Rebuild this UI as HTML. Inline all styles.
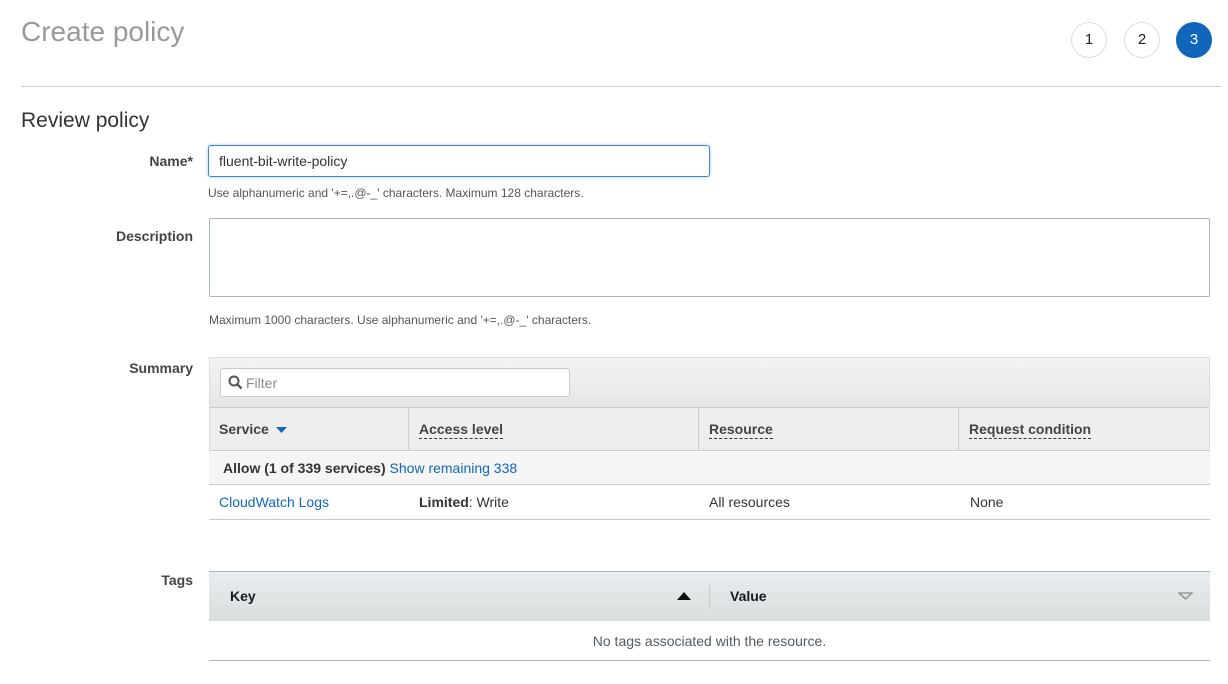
<!DOCTYPE html>
<html><head><style>
*{box-sizing:border-box;margin:0;padding:0}
body{width:1228px;height:684px;background:#fff;font-family:"Liberation Sans",Arial,sans-serif;color:#444;position:relative;overflow:hidden;font-size:14px}
.a{position:absolute}
.c{position:absolute;width:36px;height:36px;border-radius:50%;border:1px solid #ddd;text-align:center;line-height:34px;font-size:15px;color:#222;top:21px}
.lbl{position:absolute;font-weight:bold;color:#444;font-size:14px;right:1035px;text-align:right}
.hint{position:absolute;font-size:12px;color:#555}
.dash{border-bottom:1px dashed #333;padding-bottom:1px}
</style></head><body>
<div class="a" style="left:21px;top:16px;font-size:28px;color:#999">Create policy</div>
<div class="c" style="left:1071px;top:22px">1</div>
<div class="c" style="left:1124px;top:22px">2</div>
<div class="c" style="left:1176px;top:22px;background:#1166bb;border-color:#1166bb;color:#fff">3</div>
<div class="a" style="left:21px;top:86px;width:1200px;border-top:1px solid #ccc"></div>
<div class="a" style="left:21px;top:109px;font-size:21px;color:#333">Review policy</div>

<div class="lbl" style="top:153px">Name*</div>
<div class="a" style="left:208px;top:145px;width:502px;height:32px;border:1px solid #3b87d9;border-radius:3px;box-shadow:0 0 3px rgba(0,115,187,.4);padding:7px 10px;font-size:14px;color:#333">fluent-bit-write-policy</div>
<div class="hint" style="left:208px;top:186px">Use alphanumeric and '+=,.@-_' characters. Maximum 128 characters.</div>

<div class="lbl" style="top:228px">Description</div>
<div class="a" style="left:209px;top:218px;width:1001px;height:79px;border:1px solid #aab7b8;border-radius:2px"></div>
<div class="hint" style="left:209px;top:313px">Maximum 1000 characters. Use alphanumeric and '+=,.@-_' characters.</div>

<div class="lbl" style="top:360px">Summary</div>
<div class="a" style="left:209px;top:357px;width:1001px;height:163px;border-bottom:1px solid #ccc">
 <div class="a" style="left:0;top:0;width:1001px;height:95px;border:1px solid #ddd;border-bottom:none"></div>
 <div class="a" style="left:1px;top:1px;width:999px;height:50px;background:linear-gradient(#f3f3f3,#e6e6e6);border-bottom:1px solid #ccc"></div>
 <div class="a" style="left:11px;top:11px;width:350px;height:29px;background:#fff;border:1px solid #ccc;border-radius:3px">
  <svg class="a" style="left:7px;top:6px" width="15" height="15" viewBox="0 0 15 15"><circle cx="6" cy="6" r="4.5" fill="none" stroke="#555" stroke-width="2"/><path d="M9.3 9.3L13.5 13.5" stroke="#555" stroke-width="2.4"/></svg>
  <span class="a" style="left:25px;top:6px;color:#888;font-size:14px">Filter</span>
 </div>
 <div class="a" style="left:1px;top:51px;width:999px;height:43px;background:#eee;border-bottom:1px solid #ccc;font-weight:bold;color:#444">
  <span class="a" style="left:9px;top:13px">Service</span>
  <svg class="a" style="left:66px;top:19px" width="11" height="6"><path d="M0 0H11L5.5 6Z" fill="#1166bb"/></svg>
  <div class="a" style="left:198px;top:0;height:43px;border-left:1px solid #ccc"></div>
  <span class="a dash" style="left:209px;top:13px">Access level</span>
  <div class="a" style="left:488px;top:0;height:43px;border-left:1px solid #ccc"></div>
  <span class="a dash" style="left:499px;top:13px">Resource</span>
  <div class="a" style="left:748px;top:0;height:43px;border-left:1px solid #ccc"></div>
  <span class="a dash" style="left:759px;top:13px">Request condition</span>
 </div>
 <div class="a" style="left:0;top:95px;width:1001px;height:33px;background:#f5f5f5;border-bottom:1px solid #ccc">
  <span class="a" style="left:14px;top:8px"><b style="color:#333">Allow (1 of 339 services)</b> <span style="color:#1166bb">Show remaining 338</span></span>
 </div>
 <span class="a" style="left:10px;top:137px;color:#1166bb">CloudWatch Logs</span>
 <span class="a" style="left:210px;top:137px;color:#333"><b>Limited</b>: Write</span>
 <span class="a" style="left:500px;top:137px;color:#333">All resources</span>
 <span class="a" style="left:761px;top:137px;color:#333">None</span>
</div>

<div class="lbl" style="top:572px">Tags</div>
<div class="a" style="left:209px;top:571px;width:1001px;height:50px;background:linear-gradient(#e9ecee,#d9dedf);border-top:1px solid #aab7b8;font-weight:bold;color:#16191f">
 <span class="a" style="left:21px;top:16px">Key</span>
 <svg class="a" style="left:468px;top:20px" width="14" height="8"><path d="M0 8H14L7 0Z" fill="#111"/></svg>
 <div class="a" style="left:500px;top:13px;height:24px;border-left:1px solid #c6cbcc"></div>
 <span class="a" style="left:521px;top:16px">Value</span>
 <svg class="a" style="left:969px;top:20px" width="15" height="8"><path d="M1 1H14L7.5 7Z" fill="none" stroke="#999" stroke-width="1.6"/></svg>
</div>
<div class="a" style="left:209px;top:621px;width:1001px;height:40px;border-bottom:1px solid #aab7b8;text-align:center;padding-top:12px;color:#545b64">No tags associated with the resource.</div>
</body></html>
